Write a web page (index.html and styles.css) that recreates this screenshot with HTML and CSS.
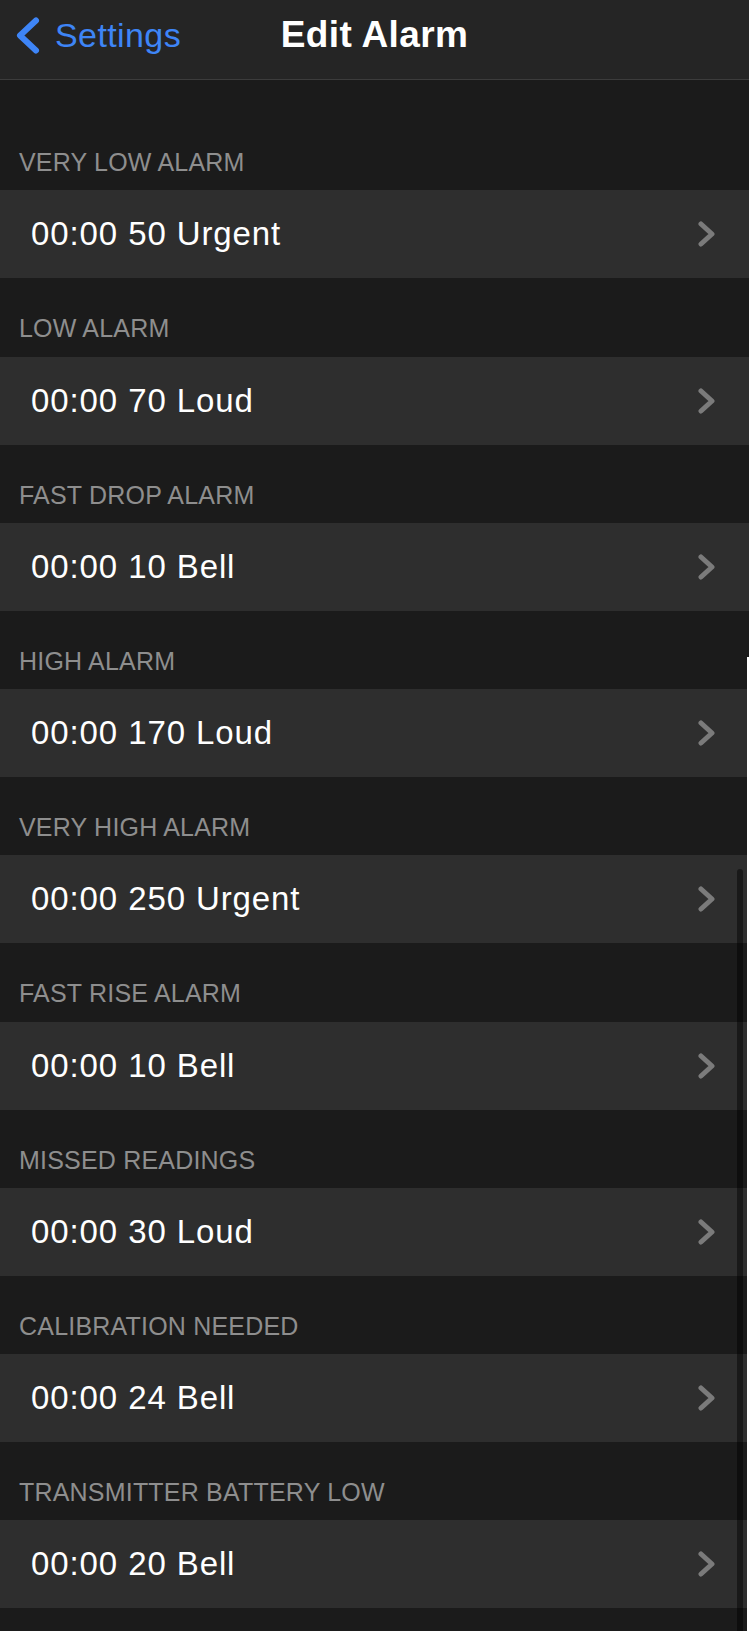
FILE: index.html
```html
<!DOCTYPE html>
<html lang="en">
<head>
<meta charset="utf-8">
<title>Edit Alarm</title>
<link rel="stylesheet" href="styles.css">
</head>
<body>
<div class="screen">
  <header class="nav">
    <div class="back">
      <svg class="back-icon" width="28" height="42" viewBox="0 0 28 42"><polyline points="22,6.5 6,21.5 22,36.5" fill="none" stroke="#3e85f7" stroke-width="6" stroke-linecap="round" stroke-linejoin="round"/></svg>
      <span class="back-label">Settings</span>
    </div>
    <h1 class="title">Edit Alarm</h1>
    <div class="spacer"></div>
  </header>

  <main class="list">
    <section class="group first">
      <h2 class="group-title">VERY LOW ALARM</h2>
      <div class="row"><span class="row-text">00:00 50 Urgent</span><svg class="chev" width="20" height="30" viewBox="0 0 20 30"><polyline points="6,5 17,15 6,25" fill="none" stroke="#7b7b7b" stroke-width="5" stroke-linecap="round" stroke-linejoin="round"/></svg></div>
    </section>
    <section class="group">
      <h2 class="group-title">LOW ALARM</h2>
      <div class="row"><span class="row-text">00:00 70 Loud</span><svg class="chev" width="20" height="30" viewBox="0 0 20 30"><polyline points="6,5 17,15 6,25" fill="none" stroke="#7b7b7b" stroke-width="5" stroke-linecap="round" stroke-linejoin="round"/></svg></div>
    </section>
    <section class="group">
      <h2 class="group-title">FAST DROP ALARM</h2>
      <div class="row"><span class="row-text">00:00 10 Bell</span><svg class="chev" width="20" height="30" viewBox="0 0 20 30"><polyline points="6,5 17,15 6,25" fill="none" stroke="#7b7b7b" stroke-width="5" stroke-linecap="round" stroke-linejoin="round"/></svg></div>
    </section>
    <section class="group">
      <h2 class="group-title">HIGH ALARM</h2>
      <div class="row"><span class="row-text">00:00 170 Loud</span><svg class="chev" width="20" height="30" viewBox="0 0 20 30"><polyline points="6,5 17,15 6,25" fill="none" stroke="#7b7b7b" stroke-width="5" stroke-linecap="round" stroke-linejoin="round"/></svg></div>
    </section>
    <section class="group">
      <h2 class="group-title">VERY HIGH ALARM</h2>
      <div class="row"><span class="row-text">00:00 250 Urgent</span><svg class="chev" width="20" height="30" viewBox="0 0 20 30"><polyline points="6,5 17,15 6,25" fill="none" stroke="#7b7b7b" stroke-width="5" stroke-linecap="round" stroke-linejoin="round"/></svg></div>
    </section>
    <section class="group">
      <h2 class="group-title">FAST RISE ALARM</h2>
      <div class="row"><span class="row-text">00:00 10 Bell</span><svg class="chev" width="20" height="30" viewBox="0 0 20 30"><polyline points="6,5 17,15 6,25" fill="none" stroke="#7b7b7b" stroke-width="5" stroke-linecap="round" stroke-linejoin="round"/></svg></div>
    </section>
    <section class="group">
      <h2 class="group-title">MISSED READINGS</h2>
      <div class="row"><span class="row-text">00:00 30 Loud</span><svg class="chev" width="20" height="30" viewBox="0 0 20 30"><polyline points="6,5 17,15 6,25" fill="none" stroke="#7b7b7b" stroke-width="5" stroke-linecap="round" stroke-linejoin="round"/></svg></div>
    </section>
    <section class="group">
      <h2 class="group-title">CALIBRATION NEEDED</h2>
      <div class="row"><span class="row-text">00:00 24 Bell</span><svg class="chev" width="20" height="30" viewBox="0 0 20 30"><polyline points="6,5 17,15 6,25" fill="none" stroke="#7b7b7b" stroke-width="5" stroke-linecap="round" stroke-linejoin="round"/></svg></div>
    </section>
    <section class="group">
      <h2 class="group-title">TRANSMITTER BATTERY LOW</h2>
      <div class="row"><span class="row-text">00:00 20 Bell</span><svg class="chev" width="20" height="30" viewBox="0 0 20 30"><polyline points="6,5 17,15 6,25" fill="none" stroke="#7b7b7b" stroke-width="5" stroke-linecap="round" stroke-linejoin="round"/></svg></div>
    </section>
  </main>

  <div class="scroll-indicator"></div>
  <div class="edge-right"></div>
  <div class="edge-bottom"></div>
</div>
</body>
</html>
```

FILE: styles.css
```css
html, body {
  margin: 0;
  padding: 0;
  background: #1b1b1b;
}

body {
  font-family: "Liberation Sans", Arial, sans-serif;
  color: #ffffff;
}

.screen {
  position: relative;
  width: 749px;
  height: 1633px;
  overflow: hidden;
  background: #1b1b1b;
}

.nav {
  display: grid;
  grid-template-columns: 1fr auto 1fr;
  align-items: center;
  box-sizing: border-box;
  height: 80px;
  padding-bottom: 10px;
  background: #252525;
  border-bottom: 1px solid #3c3c3c;
}

.back {
  display: flex;
  align-items: center;
  padding-left: 14px;
}

.back-icon {
  display: block;
  flex: none;
}

.back-label {
  margin-left: 13px;
  font-size: 34px;
  line-height: 36px;
  letter-spacing: 0.4px;
  color: #3e85f7;
}

.title {
  margin: 0;
  font-size: 37px;
  line-height: 36px;
  font-weight: 700;
  color: #ffffff;
  letter-spacing: 0.4px;
}

.list {
  display: flex;
  flex-direction: column;
}

.group-title {
  margin: 0;
  padding: 35px 19px 13.25px;
  font-size: 25px;
  line-height: 30px;
  font-weight: 400;
  letter-spacing: 0.2px;
  color: #8e8e8e;
}

.group.first .group-title {
  padding-top: 67px;
}

.row {
  display: flex;
  align-items: center;
  justify-content: space-between;
  height: 88px;
  padding: 0 34px 0 31px;
  background: #2e2e2e;
}

.row-text {
  font-size: 33px;
  line-height: 88px;
  letter-spacing: 0.9px;
  color: #ffffff;
}

.chev {
  display: block;
  flex: none;
}

.scroll-indicator {
  position: absolute;
  left: 737px;
  top: 869px;
  width: 6px;
  height: 800px;
  border-radius: 3px;
  background: rgba(0, 0, 0, 0.45);
}

.edge-right {
  position: absolute;
  left: 747px;
  top: 657px;
  width: 2px;
  bottom: 0;
  background: #ffffff;
}

.edge-bottom {
  position: absolute;
  left: 0;
  right: 0;
  bottom: 0;
  height: 2px;
  background: #ffffff;
}
```
